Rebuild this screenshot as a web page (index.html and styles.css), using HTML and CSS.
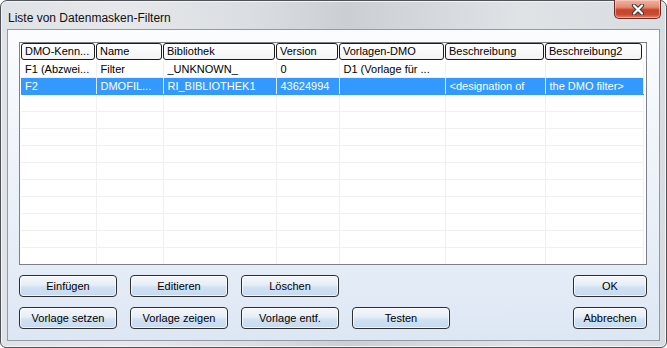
FILE: index.html
```html
<!DOCTYPE html>
<html>
<head>
<meta charset="UTF-8">
<title>Liste von Datenmasken-Filtern</title>
<link rel="stylesheet" href="styles.css">
</head>
<body>
<div class="window">
	<div class="titlebar">
		<span class="title">Liste von Datenmasken-Filtern</span>
		<button type="button" class="close" title="Schließen">
			<svg width="14" height="11" viewBox="0 0 14 11">
				<path d="M3 1.5 L11 9.5 M11 1.5 L3 9.5" stroke="#3a3a3a" stroke-width="4.2" stroke-linecap="round"/>
				<path d="M3 1.5 L11 9.5 M11 1.5 L3 9.5" stroke="#fff" stroke-width="2.2" stroke-linecap="round"/>
			</svg>
		</button>
	</div>
	<div class="client">
		<div class="list">
			<table>
				<colgroup>
					<col style="width:75px"><col style="width:67px"><col style="width:113px"><col style="width:63px"><col style="width:106px"><col style="width:100px"><col style="width:98px"><col>
				</colgroup>
				<thead>
					<tr>
						<th><div>DMO-Kenn...</div></th>
						<th><div>Name</div></th>
						<th><div>Bibliothek</div></th>
						<th><div>Version</div></th>
						<th><div>Vorlagen-DMO</div></th>
						<th><div>Beschreibung</div></th>
						<th><div>Beschreibung2</div></th>
						<th class="rest"></th>
					</tr>
				</thead>
				<tbody>
					<tr><td>F1 (Abzwei...</td><td>Filter</td><td>_UNKNOWN_</td><td>0</td><td>D1 (Vorlage für ...</td><td></td><td></td><td class="rest"></td></tr>
					<tr class="selected"><td>F2</td><td>DMOFIL...</td><td>RI_BIBLIOTHEK1</td><td>43624994</td><td></td><td>&lt;designation of</td><td>the DMO filter&gt;</td><td class="rest"></td></tr>
					<tr><td></td><td></td><td></td><td></td><td></td><td></td><td></td><td class="rest"></td></tr>
					<tr><td></td><td></td><td></td><td></td><td></td><td></td><td></td><td class="rest"></td></tr>
					<tr><td></td><td></td><td></td><td></td><td></td><td></td><td></td><td class="rest"></td></tr>
					<tr><td></td><td></td><td></td><td></td><td></td><td></td><td></td><td class="rest"></td></tr>
					<tr><td></td><td></td><td></td><td></td><td></td><td></td><td></td><td class="rest"></td></tr>
					<tr><td></td><td></td><td></td><td></td><td></td><td></td><td></td><td class="rest"></td></tr>
					<tr><td></td><td></td><td></td><td></td><td></td><td></td><td></td><td class="rest"></td></tr>
					<tr><td></td><td></td><td></td><td></td><td></td><td></td><td></td><td class="rest"></td></tr>
					<tr><td></td><td></td><td></td><td></td><td></td><td></td><td></td><td class="rest"></td></tr>
					<tr><td></td><td></td><td></td><td></td><td></td><td></td><td></td><td class="rest"></td></tr>
					<tr><td></td><td></td><td></td><td></td><td></td><td></td><td></td><td class="rest"></td></tr>
				</tbody>
			</table>
		</div>
		<div class="actions">
			<div class="row">
				<button type="button" class="btn">Einfügen</button>
				<button type="button" class="btn">Editieren</button>
				<button type="button" class="btn">Löschen</button>
				<span class="spacer"></span>
				<button type="button" class="btn small">OK</button>
			</div>
			<div class="row">
				<button type="button" class="btn">Vorlage setzen</button>
				<button type="button" class="btn">Vorlage zeigen</button>
				<button type="button" class="btn">Vorlage entf.</button>
				<button type="button" class="btn">Testen</button>
				<span class="spacer"></span>
				<button type="button" class="btn small">Abbrechen</button>
			</div>
		</div>
	</div>
</div>
</body>
</html>
```

FILE: styles.css
```css
html, body {
	margin: 0;
	padding: 0;
	background: #fff;
}

body {
	font-family: "Liberation Sans", Arial, sans-serif;
	font-size: 11px;
	color: #000;
}

.window {
	box-sizing: border-box;
	width: 667px;
	height: 348px;
	display: flex;
	flex-direction: column;
	padding: 0 6px 6px 6px;
	border: 1px solid #4f5357;
	border-radius: 7px 7px 6px 6px;
	background: linear-gradient(90deg, #dfe2e6 0%, #e6e8eb 18%, #dadde1 38%, #cbcfd4 52%, #d3d6da 62%, #e0e3e6 78%, #d9dce0 100%);
	box-shadow: inset 0 0 0 1px #f2f4f6;
}

.titlebar {
	height: 28px;
	display: flex;
	align-items: flex-start;
	flex: none;
}

.title {
	flex: 1;
	font-size: 12px;
	line-height: 16px;
	padding: 9px 0 0 1px;
	color: #101010;
}

.close {
	width: 47px;
	height: 19px;
	margin: -1px -1px 0 0;
	padding: 0;
	display: flex;
	align-items: center;
	justify-content: center;
	border: 1px solid #6b2a20;
	border-top: none;
	border-radius: 0 0 5px 5px;
	background: linear-gradient(#f0b3a2 0%, #e38b72 40%, #c8442a 55%, #c94a30 80%, #e0826a 100%);
	box-shadow: inset 0 0 0 1px rgba(255, 220, 210, .5);
}

.client {
	flex: 1;
	min-height: 0;
	display: flex;
	flex-direction: column;
	padding: 12px 12px 11px 11px;
	border: 1px solid #939aa3;
	background: linear-gradient(#fbfcfe 0%, #eef3fa 45%, #dde7f4 100%);
}

.list {
	flex: 1;
	min-height: 0;
	overflow: hidden;
	padding: 0 1px;
	border: 1px solid #7c8088;
	background: #fff;
}

table {
	table-layout: fixed;
	width: 100%;
	border-collapse: collapse;
}

th {
	padding: 0 1px 1px 0;
	height: 17px;
	font-weight: normal;
	text-align: left;
}

th div {
	box-sizing: border-box;
	height: 17px;
	line-height: 15px;
	padding-left: 3px;
	white-space: nowrap;
	overflow: hidden;
	border: 1px solid #1a1a1a;
	border-radius: 3px;
	background: linear-gradient(#ffffff, #f3f3f3);
}

td {
	height: 16px;
	padding: 0 0 0 4px;
	line-height: 16px;
	white-space: nowrap;
	overflow: hidden;
	border-right: 1px solid #f0f0f0;
	border-bottom: 1px solid #f0f0f0;
}

td.rest, th.rest {
	border: none;
}

tr.selected td {
	background: #3399ff;
	color: #fff;
	border-right-color: #dbe9fb;
	border-bottom-color: #3399ff;
}

tr.selected td.rest {
	background: #fff;
}

.actions {
	flex: none;
	margin-top: 10px;
	display: flex;
	flex-direction: column;
	gap: 10px;
}

.row {
	display: flex;
	gap: 13px;
}

.spacer {
	flex: 1;
}

.btn {
	width: 98px;
	height: 22px;
	padding: 0;
	font-family: "Liberation Sans", Arial, sans-serif;
	font-size: 11px;
	color: #000;
	border: 1px solid #2e2e2e;
	border-radius: 4px;
	background: linear-gradient(#f4f7fb 0%, #e6eef8 45%, #d3e2f3 55%, #c6d9ef 100%);
	box-shadow: inset 0 0 0 1px rgba(255, 255, 255, .7);
}

.btn.small {
	width: 74px;
}
```
